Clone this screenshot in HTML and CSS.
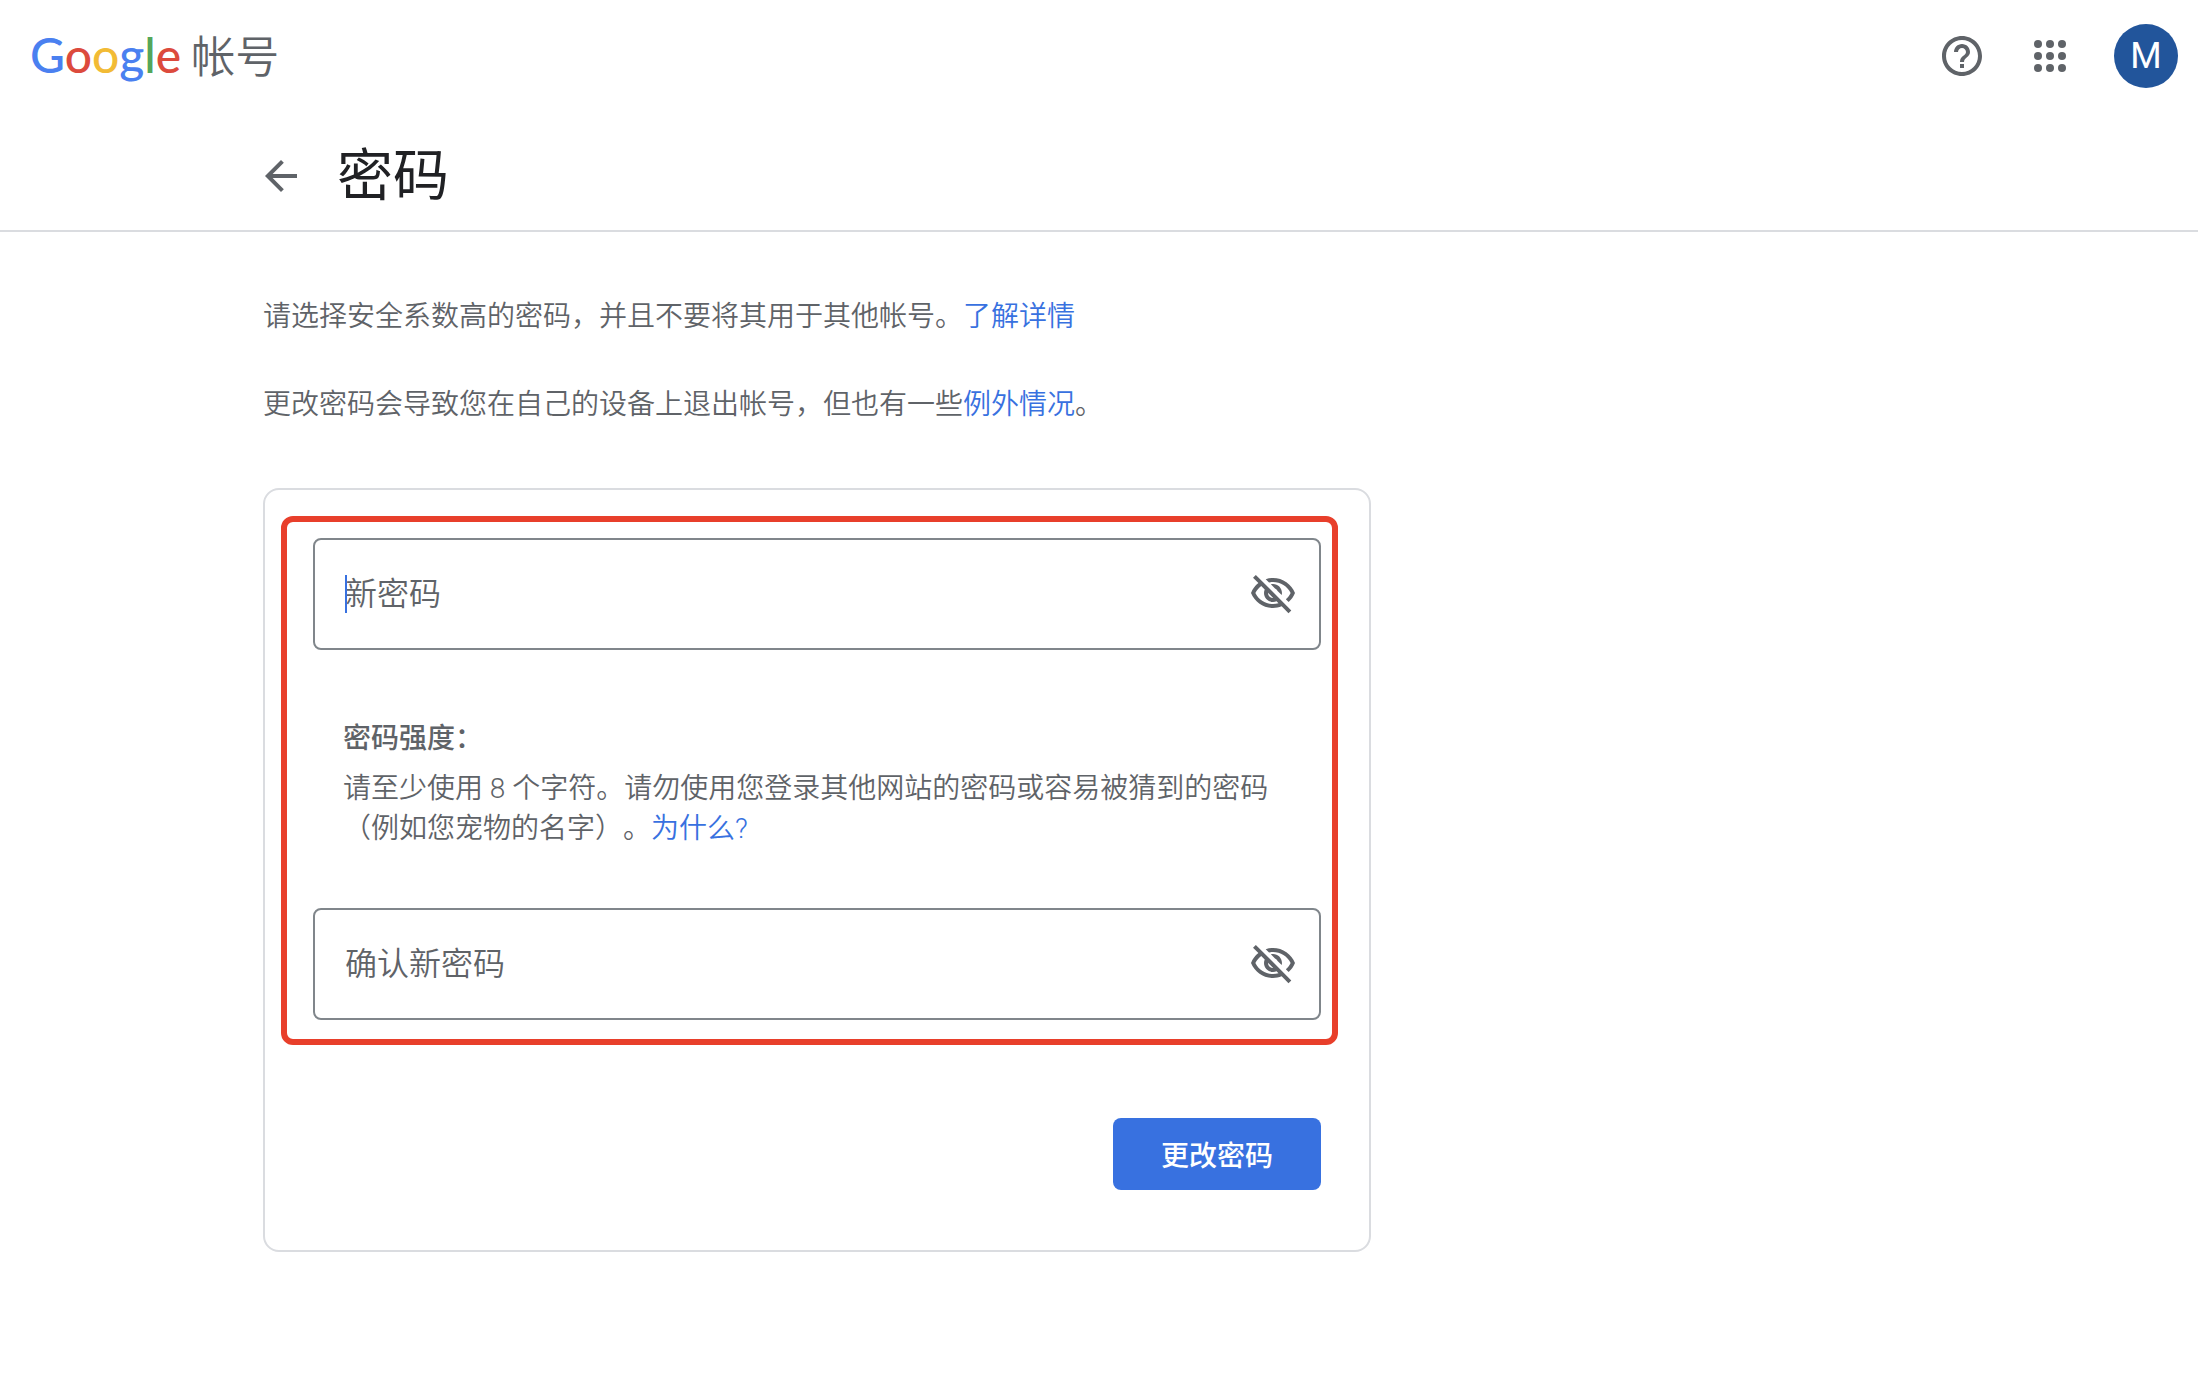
FILE: index.html
```html
<!DOCTYPE html>
<html lang="zh-CN">
<head>
    <meta charset="UTF-8">
    <meta name="viewport" content="width=device-width, initial-scale=1.0">
    <title>密码</title>
    <link rel="stylesheet" href="styles.css">
</head>
<body>
    <header class="topbar">
        <a class="logo" href="#">
            <span class="google"><span class="blue">G</span><span class="red">o</span><span class="yellow">o</span><span class="blue">g</span><span class="green">l</span><span class="red">e</span></span>
            <span class="product">帐号</span>
        </a>
        <div class="actions">
            <button type="button" class="icon-button" aria-label="帮助">
                <svg viewBox="0 0 24 24"><path d="M11 18h2v-2h-2v2zm1-16C6.48 2 2 6.48 2 12s4.48 10 10 10 10-4.48 10-10S17.52 2 12 2zm0 18c-4.41 0-8-3.59-8-8s3.59-8 8-8 8 3.59 8 8-3.59 8-8 8zm0-14c-2.21 0-4 1.79-4 4h2c0-1.1.9-2 2-2s2 .9 2 2c0 2-3 1.75-3 5h2c0-2.25 3-2.5 3-5 0-2.21-1.79-4-4-4z"/></svg>
            </button>
            <button type="button" class="icon-button" aria-label="Google 应用">
                <svg viewBox="0 0 24 24">
                    <circle cx="6" cy="6" r="2"/><circle cx="12" cy="6" r="2"/><circle cx="18" cy="6" r="2"/>
                    <circle cx="6" cy="12" r="2"/><circle cx="12" cy="12" r="2"/><circle cx="18" cy="12" r="2"/>
                    <circle cx="6" cy="18" r="2"/><circle cx="12" cy="18" r="2"/><circle cx="18" cy="18" r="2"/>
                </svg>
            </button>
            <button type="button" class="avatar">M</button>
        </div>
    </header>

    <div class="title-bar">
        <button type="button" class="icon-button" aria-label="返回">
            <svg viewBox="0 0 24 24"><path d="M20 11H7.83l5.59-5.59L12 4l-8 8 8 8 1.41-1.41L7.83 13H20v-2z"/></svg>
        </button>
        <h1>密码</h1>
    </div>

    <main>
        <p class="intro">请选择安全系数高的密码，并且不要将其用于其他帐号。<a href="#">了解详情</a></p>
        <p class="intro">更改密码会导致您在自己的设备上退出帐号，但也有一些<a href="#">例外情况</a>。</p>

        <form class="card">
            <div class="highlight">
                <div class="field">
                    <span class="caret"></span>
                    <input type="password" id="new-password" placeholder="新密码" aria-label="新密码">
                    <button type="button" class="icon-button" aria-label="显示密码">
                        <svg viewBox="0 0 24 24"><path id="eye-off" d="M12 6c3.79 0 7.17 2.13 8.82 5.5-.59 1.22-1.42 2.27-2.41 3.12l1.41 1.41c1.39-1.23 2.49-2.77 3.18-4.53C21.27 7.11 17 4 12 4c-1.27 0-2.49.2-3.64.57l1.65 1.65C10.66 6.09 11.32 6 12 6zm-1.07 1.14L13 9.21c.57.25 1.03.71 1.28 1.28l2.07 2.07c.08-.34.14-.7.14-1.07C16.5 9.01 14.48 7 12 7c-.37 0-.72.05-1.07.14zM2.01 3.87l2.68 2.68C3.06 7.83 1.77 9.53 1 11.5 2.73 15.89 7 19 12 19c1.52 0 2.98-.29 4.32-.82l3.42 3.42 1.41-1.41L3.42 2.45 2.01 3.87zm7.5 7.5l2.61 2.61c-.04.01-.08.02-.12.02-1.38 0-2.5-1.12-2.5-2.5 0-.05.01-.08.01-.13zm-3.4-3.4l1.75 1.75c-.23.55-.36 1.15-.36 1.78 0 2.48 2.02 4.5 4.5 4.5.63 0 1.23-.13 1.77-.36l.98.98c-.88.24-1.8.38-2.75.38-3.79 0-7.17-2.13-8.82-5.5.7-1.43 1.72-2.61 2.93-3.53z"/></svg>
                    </button>
                </div>

                <div class="strength">
                    <h2>密码强度：</h2>
                    <p>请至少使用 8 个字符。请勿使用您登录其他网站的密码或容易被猜到的密码（例如您宠物的名字）。<a href="#">为什么?</a></p>
                </div>

                <div class="field">
                    <input type="password" id="confirm-password" placeholder="确认新密码" aria-label="确认新密码">
                    <button type="button" class="icon-button" aria-label="显示密码">
                        <svg viewBox="0 0 24 24"><use href="#eye-off"/></svg>
                    </button>
                </div>
            </div>

            <div class="form-actions">
                <button type="submit" class="submit">更改密码</button>
            </div>
        </form>
    </main>
</body>
</html>
```
FILE: styles.css
```css
* {
    box-sizing: border-box;
}

body {
    margin: 0;
    background-color: #fff;
    color: #5f6368;
    font-family: Roboto, "Noto Sans CJK SC", sans-serif;
    font-size: 28px;
    font-weight: 350;
    line-height: 40px;
    text-spacing-trim: space-all;
}

h1, h2, p {
    margin: 0;
}

a {
    color: #3871e0;
    text-decoration: none;
}

button, input {
    font-family: inherit;
    font-weight: inherit;
    border: none;
    padding: 0;
}

button {
    cursor: pointer;
}

/* Top bar */
.topbar {
    display: flex;
    justify-content: space-between;
    align-items: center;
    height: 112px;
    padding: 0 20px 0 30px;
}

.logo {
    display: flex;
    align-items: baseline;
    gap: 10px;
    line-height: 64px;
    color: #5f6368;
}

.google {
    font-family: Lato, sans-serif;
    font-size: 48px;
    font-weight: 500;
}

.product {
    font-size: 44px;
}

.blue { color: #4a80f0; }
.red { color: #dc4a3d; }
.yellow { color: #f2bb35; }
.green { color: #54a65a; }

.actions {
    display: flex;
    align-items: center;
    gap: 40px;
}

.icon-button {
    flex: none;
    width: 48px;
    height: 48px;
    background: none;
}

.icon-button svg {
    display: block;
    width: 100%;
    height: 100%;
    fill: #5f6368;
}

.avatar {
    width: 64px;
    height: 64px;
    border-radius: 50%;
    background-color: #22559b;
    color: #fff;
    font-size: 36px;
    font-weight: 400;
}

/* Title bar */
.title-bar {
    display: flex;
    align-items: center;
    gap: 32px;
    height: 120px;
    padding: 10px 257px 0;
    border-bottom: 2px solid #dadce0;
}

.title-bar h1 {
    color: #202124;
    font-size: 56px;
    font-weight: 400;
    line-height: 72px;
}

main {
    padding: 65px 263px;
}

.intro {
    margin-bottom: 48px;
}

/* Password form */
.card {
    max-width: 1108px;
    margin-top: 63px;
    padding: 26px 31px 60px 16px;
    border: 2px solid #dadce0;
    border-radius: 16px;
}

.highlight {
    padding: 16px 11px 19px 26px;
    border: 6px solid #e83f2b;
    border-radius: 12px;
}

.field {
    position: relative;
    display: flex;
    align-items: center;
    height: 112px;
    padding: 0 22px 0 30px;
    border: 2px solid #80868b;
    border-radius: 8px;
}

.field input {
    flex: 1;
    min-width: 0;
    height: 100%;
    background: none;
    color: #202124;
    font-size: 32px;
    outline: none;
}

.field input::placeholder {
    color: #5f6368;
    opacity: 1;
}

/* Text cursor of the active field */
.caret {
    position: absolute;
    left: 30px;
    top: 35px;
    width: 2px;
    height: 38px;
    background-color: #3871e0;
}

.strength {
    padding: 69px 30px 59px;
}

.strength h2 {
    margin-bottom: 10px;
    font-size: 28px;
    font-weight: 500;
}

.form-actions {
    display: flex;
    justify-content: flex-end;
    padding: 73px 17px 0 0;
}

.submit {
    height: 72px;
    padding: 0 48px;
    border-radius: 8px;
    background-color: #3871e0;
    color: #fff;
    font-size: 28px;
    font-weight: 500;
}

.submit:hover {
    background-color: #2f63cb;
}
```
